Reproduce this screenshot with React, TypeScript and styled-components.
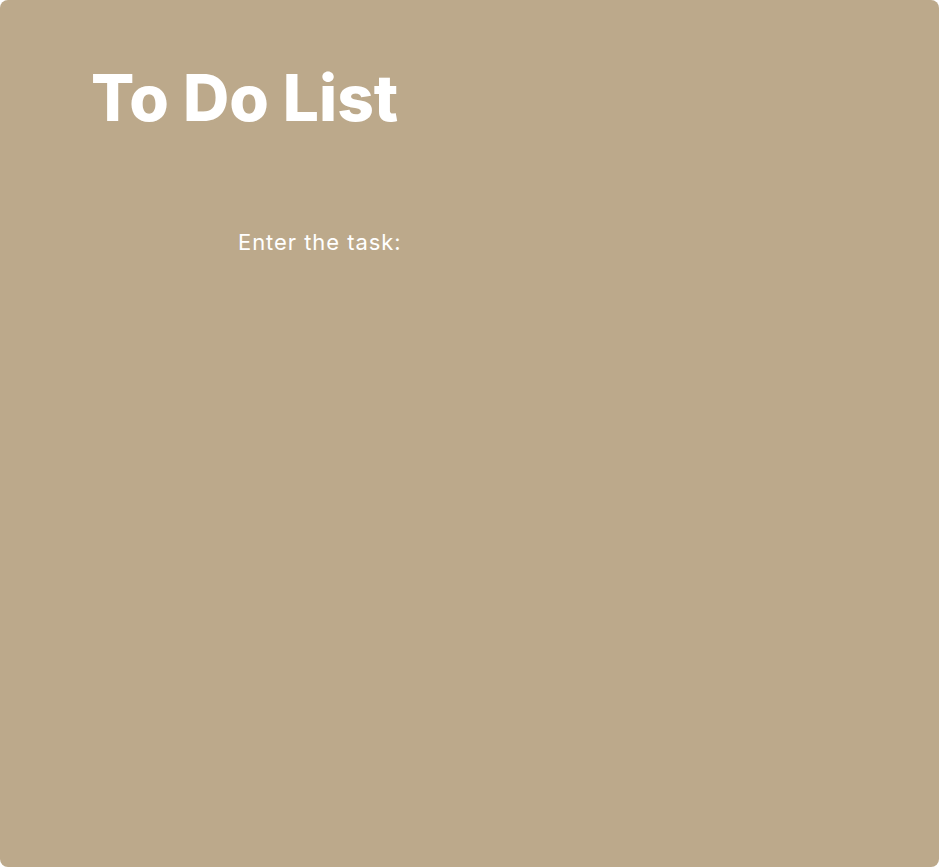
import React from "react";
import styled, { createGlobalStyle } from "styled-components";

const GlobalStyle = createGlobalStyle`
  html, body { margin: 0; padding: 0; background: #ffffff; }
  body { font-family: Inter, "Noto Sans", sans-serif; }
`;

const Card = styled.main`
  box-sizing: border-box;
  width: 939px;
  height: 867px;
  background: #bca98b;
  border-radius: 8px;
  padding: 62px 0 0 91px;
  display: flex;
  flex-direction: column;
`;

const Title = styled.h1`
  margin: 0;
  font-family: Inter, sans-serif;
  font-weight: 800;
  font-size: 64px;
  line-height: 72px;
  letter-spacing: 0;
  color: #ffffff;
`;

const Form = styled.form`
  display: flex;
  align-items: center;
  margin: 94px 0 0 147px;
`;

const Label = styled.label`
  font-family: Inter, sans-serif;
  font-size: 22px;
  font-weight: 400;
  line-height: 28px;
  letter-spacing: 0.95px;
  color: #ffffff;
`;

export default function App() {
  return (
    <>
      <GlobalStyle />
      <Card>
        <Title>To Do List</Title>
        <Form onSubmit={(e) => e.preventDefault()}>
          <Label htmlFor="task">Enter the task:</Label>
        </Form>
      </Card>
    </>
  );
}
